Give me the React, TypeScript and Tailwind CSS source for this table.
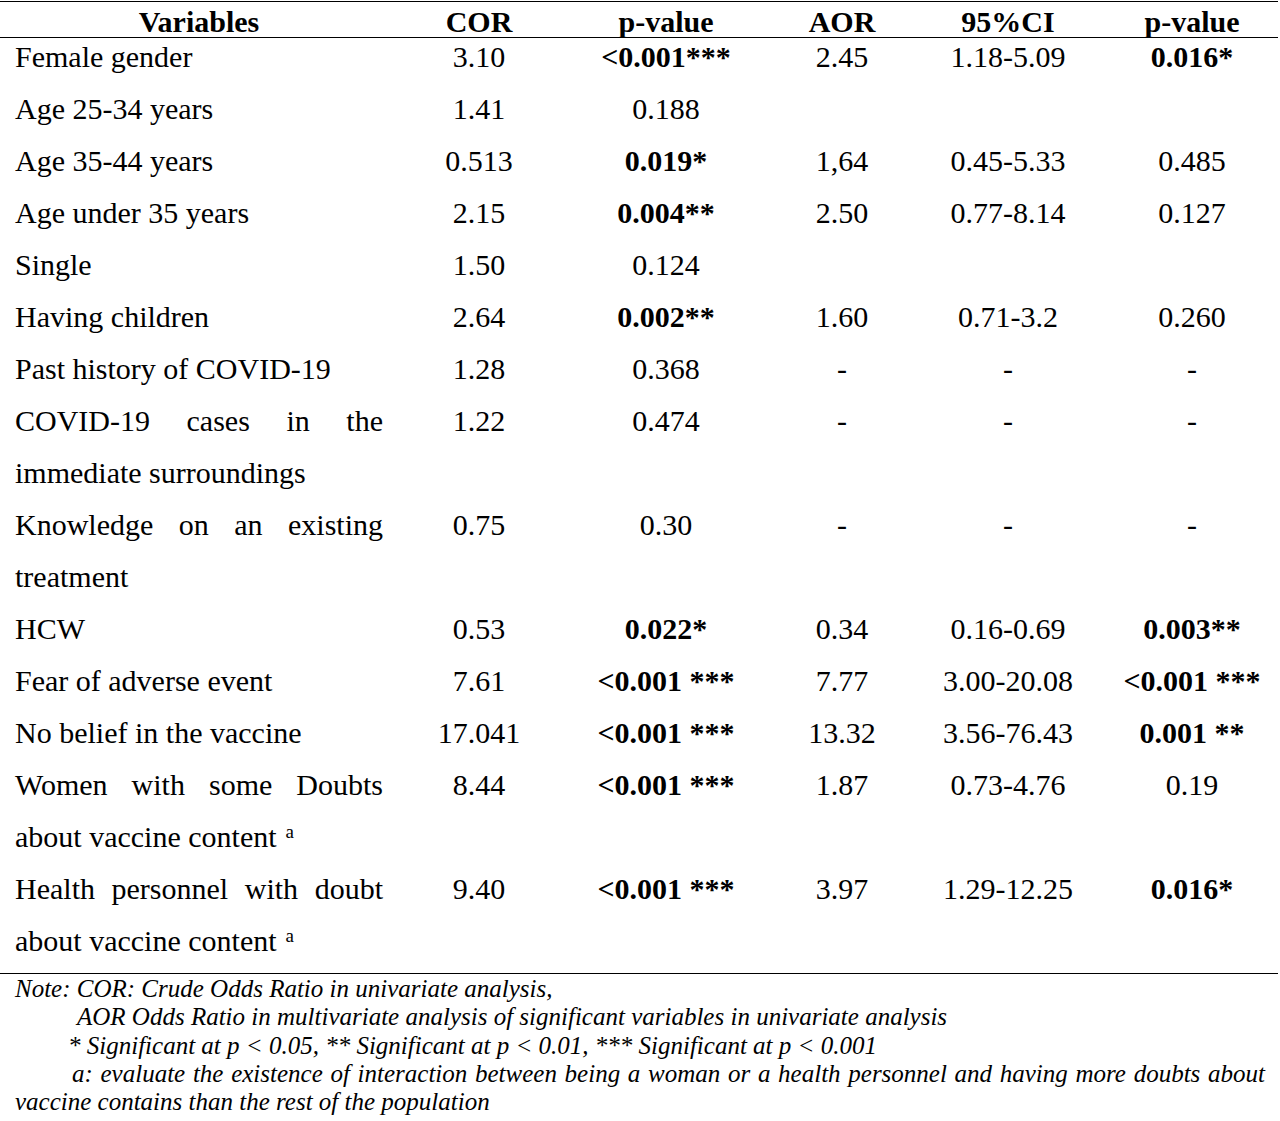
import React from "react";

type Row = { v: React.ReactNode; c: string[] };

const sup = <sup className="text-[19px] ml-[9px]">a</sup>;

const rows: Row[] = [
  { v: "Female gender", c: ["3.10", "<0.001***", "2.45", "1.18-5.09", "0.016*"] },
  { v: "Age 25-34 years", c: ["1.41", "0.188", "", "", ""] },
  { v: "Age 35-44 years", c: ["0.513", "0.019*", "1,64", "0.45-5.33", "0.485"] },
  { v: "Age under 35 years", c: ["2.15", "0.004**", "2.50", "0.77-8.14", "0.127"] },
  { v: "Single", c: ["1.50", "0.124", "", "", ""] },
  { v: "Having children", c: ["2.64", "0.002**", "1.60", "0.71-3.2", "0.260"] },
  { v: "Past history of COVID-19", c: ["1.28", "0.368", "-", "-", "-"] },
  { v: "COVID-19 cases in the immediate surroundings", c: ["1.22", "0.474", "-", "-", "-"] },
  { v: "Knowledge on an existing treatment", c: ["0.75", "0.30", "-", "-", "-"] },
  { v: "HCW", c: ["0.53", "0.022*", "0.34", "0.16-0.69", "0.003**"] },
  { v: "Fear of adverse event", c: ["7.61", "<0.001 ***", "7.77", "3.00-20.08", "<0.001 ***"] },
  { v: "No belief in the vaccine", c: ["17.041", "<0.001 ***", "13.32", "3.56-76.43", "0.001 **"] },
  {
    v: (
      <>
        Women with some Doubts about vaccine content{sup}
      </>
    ),
    c: ["8.44", "<0.001 ***", "1.87", "0.73-4.76", "0.19"],
  },
  {
    v: (
      <>
        Health personnel with doubt about vaccine content{sup}
      </>
    ),
    c: ["9.40", "<0.001 ***", "3.97", "1.29-12.25", "0.016*"],
  },
];

const grid = "grid grid-cols-[400px_158px_216px_136px_196px_172px]";

export default function App() {
  return (
    <div className="w-[1280px] h-[1121px] bg-white overflow-hidden text-black font-['Liberation_Serif',serif]">
      <div className="w-[1278px] mt-[1px] border-t border-black">
        {/* header */}
        <div className={`${grid} border-b border-black pt-[4px] h-[36px] leading-[31px] text-[30px] font-bold`}>
          <div className="pl-[15px] pr-[17px] text-center">Variables</div>
          <div className="text-center">COR</div>
          <div className="text-center">p-value</div>
          <div className="text-center">AOR</div>
          <div className="text-center">95%CI</div>
          <div className="text-center">p-value</div>
        </div>
        {/* body */}
        <div className="border-b-[1.5px] border-black pb-[6px]">
          <div className="-mt-[7px] text-[30px] leading-[52px]">
            {rows.map((r, i) => (
              <div key={i} className={grid}>
                <div className="pl-[15px] pr-[17px] text-justify">{r.v}</div>
                {r.c.map((cell, j) => (
                  <div
                    key={j}
                    className={`text-center whitespace-nowrap ${cell.includes("*") ? "font-bold" : ""}`}
                  >
                    {cell}
                  </div>
                ))}
              </div>
            ))}
          </div>
        </div>
        {/* notes */}
        <div className="pl-[15px] pt-[1px] italic text-[25px] leading-[28.3px] whitespace-nowrap">
          <div>Note: COR: Crude Odds Ratio in univariate analysis,</div>
          <div className="pl-[62px]">
            AOR Odds Ratio in multivariate analysis of significant variables in univariate analysis
          </div>
          <div className="pl-[53px]">
            * Significant at p &lt; 0.05, ** Significant at p &lt; 0.01, *** Significant at p &lt; 0.001
          </div>
          <div className="pl-[57px] w-[1250px] text-justify [text-align-last:justify] whitespace-normal">
            a: evaluate the existence of interaction between being a woman or a health personnel and having more
            doubts about
          </div>
          <div>vaccine contains than the rest of the population</div>
        </div>
      </div>
    </div>
  );
}
